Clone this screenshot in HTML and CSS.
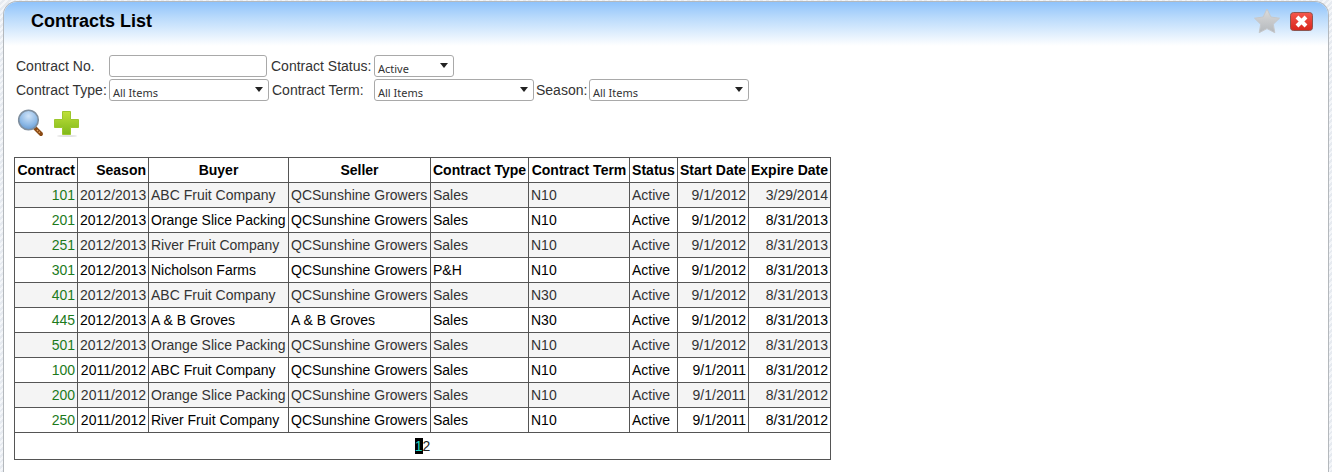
FILE: index.html
```html
<!DOCTYPE html>
<html lang="en">
<head>
<meta charset="utf-8">
<title>Contracts List</title>
<link rel="stylesheet" href="styles.css">
</head>
<body>
<div class="panel">
  <header class="titlebar">
    <h1 class="title">Contracts List</h1>
    <div class="title-actions">
      <svg class="icon-star" width="26" height="26" viewBox="0 0 26 26" aria-label="Favourite">
        <defs><linearGradient id="starFill" x1="0" y1="0" x2="0" y2="1"><stop offset="0" stop-color="#dcdcdc"/><stop offset="1" stop-color="#b4b8bc"/></linearGradient></defs>
        <path d="M13 1l3.900 8 8.600 1.200-6.200 6 1.500 8.500-7.800-4.100-7.800 4.100 1.500-8.500-6.200-6 8.600-1.200z" fill="url(#starFill)" stroke="#c6c8ca" stroke-width="1" stroke-linejoin="round"/>
      </svg>
      <svg class="icon-close" width="23" height="19" viewBox="0 0 23 19" aria-label="Close">
        <defs><linearGradient id="closeFill" x1="0" y1="0" x2="0" y2="1"><stop offset="0" stop-color="#f4574c"/><stop offset="1" stop-color="#d9261c"/></linearGradient></defs>
        <rect x="0.5" y="0.5" width="22" height="18" rx="3" fill="url(#closeFill)" stroke="#8c5550"/>
        <path d="M7 5l9 9M16 5l-9 9" stroke="#fff" stroke-width="4"/>
      </svg>
    </div>
  </header>
  <form class="filters">
    <div class="filter-row">
      <label class="lbl lbl-a">Contract No.</label>
      <input class="field field-text" type="text">
      <label class="lbl lbl-b">Contract Status:</label>
      <div class="field select select-s"><span>Active</span><i class="caret"></i></div>
    </div>
    <div class="filter-row">
      <label class="lbl lbl-a">Contract Type:</label>
      <div class="field select select-l"><span>All Items</span><i class="caret"></i></div>
      <label class="lbl lbl-c">Contract Term:</label>
      <div class="field select select-l"><span>All Items</span><i class="caret"></i></div>
      <label class="lbl lbl-d">Season:</label>
      <div class="field select select-l"><span>All Items</span><i class="caret"></i></div>
    </div>
    <div class="tools">
      <svg width="28" height="28" viewBox="0 0 28 28" aria-label="Search">
        <defs><radialGradient id="lens" cx="0.5" cy="0.3" r="0.75"><stop offset="0" stop-color="#cfe3f8"/><stop offset="0.6" stop-color="#8db9e6"/><stop offset="1" stop-color="#5f93cc"/></radialGradient></defs>
        <path d="M18 19l6 6" stroke="#8a4a14" stroke-width="4" stroke-linecap="round"/>
        <path d="M20 21l3 3" stroke="#e0a060" stroke-width="1.4" stroke-dasharray="1.4 1.2"/>
        <circle cx="11.5" cy="11" r="9.8" fill="url(#lens)" stroke="#7f8f9f" stroke-width="1.6"/>
      </svg>
      <svg width="28" height="28" viewBox="0 0 28 28" aria-label="Add">
        <defs><linearGradient id="plus" x1="0" y1="0" x2="0" y2="1"><stop offset="0" stop-color="#bfe03a"/><stop offset="1" stop-color="#7fb81a"/></linearGradient></defs>
        <ellipse cx="14" cy="27" rx="10" ry="1" fill="#e2e2e2"/>
        <path d="M9.500 2.500h8v8h8v8h-8v7h-8v-7h-8v-8h8z" fill="url(#plus)" stroke="#9cc62c"/>
      </svg>
    </div>
  </form>
  <table class="grid">
    <colgroup>
      <col class="c1"><col class="c2"><col class="c3"><col class="c4"><col class="c5"><col class="c6"><col class="c7"><col class="c8"><col class="c9">
    </colgroup>
    <thead>
      <tr><th class="r">Contract</th><th class="r">Season</th><th>Buyer</th><th>Seller</th><th>Contract Type</th><th>Contract Term</th><th>Status</th><th class="r">Start Date</th><th class="r">Expire Date</th></tr>
    </thead>
    <tbody>
      <tr class="alt"><td class="r id">101</td><td class="r">2012/2013</td><td>ABC Fruit Company</td><td>QCSunshine Growers</td><td>Sales</td><td>N10</td><td>Active</td><td class="r">9/1/2012</td><td class="r">3/29/2014</td></tr>
      <tr><td class="r id">201</td><td class="r">2012/2013</td><td>Orange Slice Packing</td><td>QCSunshine Growers</td><td>Sales</td><td>N10</td><td>Active</td><td class="r">9/1/2012</td><td class="r">8/31/2013</td></tr>
      <tr class="alt"><td class="r id">251</td><td class="r">2012/2013</td><td>River Fruit Company</td><td>QCSunshine Growers</td><td>Sales</td><td>N10</td><td>Active</td><td class="r">9/1/2012</td><td class="r">8/31/2013</td></tr>
      <tr><td class="r id">301</td><td class="r">2012/2013</td><td>Nicholson Farms</td><td>QCSunshine Growers</td><td>P&amp;H</td><td>N10</td><td>Active</td><td class="r">9/1/2012</td><td class="r">8/31/2013</td></tr>
      <tr class="alt"><td class="r id">401</td><td class="r">2012/2013</td><td>ABC Fruit Company</td><td>QCSunshine Growers</td><td>Sales</td><td>N30</td><td>Active</td><td class="r">9/1/2012</td><td class="r">8/31/2013</td></tr>
      <tr><td class="r id">445</td><td class="r">2012/2013</td><td>A &amp; B Groves</td><td>A &amp; B Groves</td><td>Sales</td><td>N30</td><td>Active</td><td class="r">9/1/2012</td><td class="r">8/31/2013</td></tr>
      <tr class="alt"><td class="r id">501</td><td class="r">2012/2013</td><td>Orange Slice Packing</td><td>QCSunshine Growers</td><td>Sales</td><td>N10</td><td>Active</td><td class="r">9/1/2012</td><td class="r">8/31/2013</td></tr>
      <tr><td class="r id">100</td><td class="r">2011/2012</td><td>ABC Fruit Company</td><td>QCSunshine Growers</td><td>Sales</td><td>N10</td><td>Active</td><td class="r">9/1/2011</td><td class="r">8/31/2012</td></tr>
      <tr class="alt"><td class="r id">200</td><td class="r">2011/2012</td><td>Orange Slice Packing</td><td>QCSunshine Growers</td><td>Sales</td><td>N10</td><td>Active</td><td class="r">9/1/2011</td><td class="r">8/31/2012</td></tr>
      <tr><td class="r id">250</td><td class="r">2011/2012</td><td>River Fruit Company</td><td>QCSunshine Growers</td><td>Sales</td><td>N10</td><td>Active</td><td class="r">9/1/2011</td><td class="r">8/31/2012</td></tr>
    </tbody>
    <tfoot>
      <tr><td class="pager" colspan="9"><span class="page-current">1</span><span class="page-link">2</span></td></tr>
    </tfoot>
  </table>
</div>
</body>
</html>
```

FILE: styles.css
```css
* { box-sizing: border-box; }
html, body { height: 100%; }
body {
  margin: 0;
  padding: 1px 3px 0;
  overflow: hidden;
  font-family: "Liberation Sans", Arial, sans-serif;
  font-size: 14px;
  color: #000;
  background: repeating-linear-gradient(135deg, #f4f6f9 0 2px, #e6eaf0 2px 4px);
}
.panel {
  height: 471px;
  background: #fff;
  border: 1px solid #b4b8bc;
  border-bottom: 0;
  border-radius: 14px 14px 0 0;
  overflow: hidden;
}
.titlebar {
  height: 44px;
  padding: 0 15px 0 27px;
  display: flex;
  align-items: center;
  justify-content: space-between;
  background: linear-gradient(#8fc3fb 0, #b5d8fb 14px, #fff 44px);
}
.title {
  margin: 0 0 5px;
  font-size: 18px;
  font-weight: bold;
}
.title-actions {
  display: flex;
  align-items: center;
  gap: 10px;
  margin-bottom: 6px;
}
.filters {
  margin-top: 9px;
  padding-left: 12px;
  display: flex;
  flex-direction: column;
  gap: 2px;
  color: #333;
}
.filter-row {
  display: flex;
  align-items: flex-start;
  height: 22px;
}
.lbl { line-height: 22px; white-space: nowrap; }
.lbl-a { width: 93px; }
.lbl-b { width: 103px; margin-left: 4px; }
.lbl-c { width: 102px; margin-left: 3px; }
.lbl-d { width: 53px; margin-left: 2px; }
.field {
  height: 22px;
  border: 1px solid #a9a9a9;
  border-radius: 3px;
  background: #fff;
}
.field-text { width: 158px; padding: 0 3px; }
.select {
  position: relative;
  font-family: "Noto Sans", sans-serif;
  font-size: 11px;
  line-height: 25px;
  padding-left: 3px;
  color: #333;
}
.select-s { width: 80px; }
.select-l { width: 160px; }
.caret {
  position: absolute;
  right: 5px;
  top: 7px;
  border: 4px solid transparent;
  border-top: 5px solid #222;
  border-bottom: 0;
}
.tools {
  display: flex;
  gap: 8px;
  margin-top: 6px;
  margin-left: 1px;
  height: 30px;
}
.grid {
  margin: 18px 0 0 10px;
  width: 816px;
  table-layout: fixed;
  border-collapse: collapse;
  color: #000;
}
.c1 { width: 63px; }
.c2 { width: 71px; }
.c3 { width: 140px; }
.c4 { width: 142px; }
.c5 { width: 98px; }
.c6 { width: 101px; }
.c7 { width: 48px; }
.c8 { width: 71px; }
.c9 { width: 82px; }
.grid th, .grid td {
  border: 1px solid #555;
  padding: 0 2px;
  height: 25px;
  white-space: nowrap;
  overflow: hidden;
  text-align: left;
}
.grid th {
  font-weight: bold;
  text-align: center;
}
.grid .r { text-align: right; }
.alt td { background: #f4f4f4; color: #333; }
.grid .id { color: #1c7a1c; }
.grid .pager {
  height: 27px;
  text-align: center;
  padding: 0;
}
.page-current { background: #000; color: #22d8c8; }
.page-link { color: #222; }
```
